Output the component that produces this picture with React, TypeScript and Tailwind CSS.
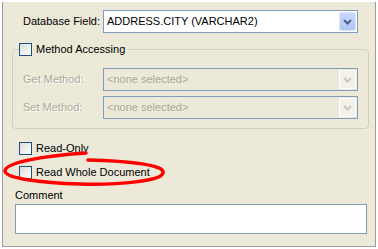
import React from "react";

const font = { fontFamily: '"Liberation Sans", Arial, sans-serif' };

function Chevron({ color }: { color: string }) {
  return (
    <svg width="9" height="6" viewBox="0 0 9 6">
      <path d="M1 1 L4.5 4.5 L8 1" fill="none" stroke={color} strokeWidth="2" />
    </svg>
  );
}

function Combo({ text, disabled }: { text: string; disabled?: boolean }) {
  return (
    <div
      className={
        "w-[255px] h-[23px] border border-[#7f9db9] flex items-stretch " +
        (disabled ? "bg-[#ece9d8]" : "bg-white")
      }
    >
      <div
        className={
          "flex-1 flex items-center pl-[3px] text-[11px] " +
          (disabled ? "text-[#aca899]" : "text-black")
        }
      >
        {text}
      </div>
      {disabled ? (
        <div className="w-[17px] m-[1px] border border-white bg-[#f2f1ea] flex items-center justify-center">
          <Chevron color="#c9c7ba" />
        </div>
      ) : (
        <div className="w-[17px] m-[1px] rounded-[2px] border border-[#dbe5fb] bg-gradient-to-b from-[#c8d8fc] to-[#b1c6f7] flex items-center justify-center">
          <Chevron color="#4d6185" />
        </div>
      )}
    </div>
  );
}

function Check({ label }: { label: string }) {
  return (
    <div className="flex items-center gap-[4px] h-[13px]">
      <div className="w-[13px] h-[13px] border border-[#1c5180] bg-gradient-to-br from-[#dcdcd7] to-white" />
      <span className="text-[11px] text-black leading-[13px]">{label}</span>
    </div>
  );
}

export default function App() {
  return (
    <div className="w-[378px] h-[249px] bg-white relative overflow-hidden" style={font}>
      <div className="ml-[2px] mt-[2px] w-[374px] h-[245px] bg-[#ece9d8] border-l border-r border-b border-[#9d9d9d] flex flex-col pt-[8px]">
        {/* Database field row */}
        <div className="flex items-center">
          <div className="w-[100px] pl-[20px] text-[11px] text-black">Database Field:</div>
          <Combo text="ADDRESS.CITY (VARCHAR2)" />
        </div>

        {/* Group box */}
        <div className="relative ml-[9px] mt-[16px] w-[357px] h-[80px] border border-[#d0d0bf] rounded-[4px] pl-[10px] pt-[18px] flex flex-col gap-[5px]">
          <div className="absolute left-[6px] top-[-7px] bg-[#ece9d8] pr-[3px]">
            <Check label="Method Accessing" />
          </div>
          <div className="flex items-center">
            <div className="w-[80px] text-[11px] text-[#aca899] [text-shadow:1px_1px_0_#ffffff]">Get Method:</div>
            <Combo text="<none selected>" disabled />
          </div>
          <div className="flex items-center">
            <div className="w-[80px] text-[11px] text-[#aca899] [text-shadow:1px_1px_0_#ffffff]">Set Method:</div>
            <Combo text="<none selected>" disabled />
          </div>
        </div>

        {/* Checkboxes */}
        <div className="pl-[16px] mt-[13px] flex flex-col gap-[11px]">
          <Check label="Read-Only" />
          <Check label="Read Whole Document" />
        </div>

        {/* Comment */}
        <div className="pl-[12px] mt-[10px] text-[11px] text-black leading-[13px]">Comment</div>
        <div className="ml-[12px] mt-[2px] w-[352px] h-[30px] border border-[#7f9db9] bg-white" />
      </div>

      {/* Red annotation ellipse */}
      <svg className="absolute left-0 top-0 pointer-events-none" width="378" height="249">
        <path
          d="M88 160 C 130 161, 165 165, 163 173 C 161 181, 120 185, 80 184 C 40 183, 5 178, 5 171 C 5 163, 40 156, 86 153"
          fill="none"
          stroke="#ff0000"
          strokeWidth="3.5"
          strokeLinecap="round"
        />
      </svg>
    </div>
  );
}
